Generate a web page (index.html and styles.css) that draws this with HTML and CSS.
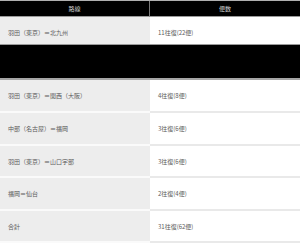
FILE: index.html
```html
<!DOCTYPE html>
<html lang="ja">
<head>
<meta charset="utf-8">
<title>路線</title>
<link rel="stylesheet" href="styles.css">
</head>
<body>
<div class="table">
  <div class="cell th left">路線</div>
  <div class="cell th">便数</div>

  <div class="cell td first left">羽田（東京）＝北九州</div>
  <div class="cell td first">11往復(22便)</div>

  <div class="cell blackrow"></div>

  <div class="cell td left">羽田（東京）＝関西（大阪）</div>
  <div class="cell td">4往復(8便)</div>

  <div class="cell td left">中部（名古屋）＝福岡</div>
  <div class="cell td">3往復(6便)</div>

  <div class="cell td left short">羽田（東京）＝山口宇部</div>
  <div class="cell td short">3往復(6便)</div>

  <div class="cell td left">福岡＝仙台</div>
  <div class="cell td">2往復(4便)</div>

  <div class="cell td left short">合計</div>
  <div class="cell td short">31往復(62便)</div>
</div>
</body>
</html>
```

FILE: styles.css
```css
html, body {
  margin: 0;
  padding: 0;
  background: #fff;
}

.table {
  display: grid;
  grid-template-columns: 150px 150px;
  width: 300px;
  border-top: 1px solid #b0b0b0;
  font-family: "Noto Sans CJK JP", "Noto Sans", sans-serif;
  font-size: 6px;
  line-height: 1;
}

.cell {
  box-sizing: border-box;
  display: flex;
  align-items: center;
}

.th {
  height: 16px;
  background: #000;
  color: #cfcfcf;
  justify-content: center;
  border-bottom: 1px solid #9a9a9a;
}

.th.left {
  border-right: 1px solid #7a7a7a;
}

.td {
  height: 33px;
  padding: 1px 0 0 8px;
  color: #5a5a5a;
  background: #fff;
  border-bottom: 2px solid #e9e9e9;
}

.td.left {
  background: #ededed;
  border-bottom-color: #fafafa;
}

.td.first {
  height: 28px;
  padding-top: 4px;
  border-bottom: 1px solid #9a9a9a;
}

.td.first.left {
  border-bottom-color: #9a9a9a;
}

.td.short {
  height: 32px;
}

.blackrow {
  grid-column: 1 / span 2;
  height: 35px;
  background: #000;
  border-bottom: 2px solid #a5a5a5;
}
```
